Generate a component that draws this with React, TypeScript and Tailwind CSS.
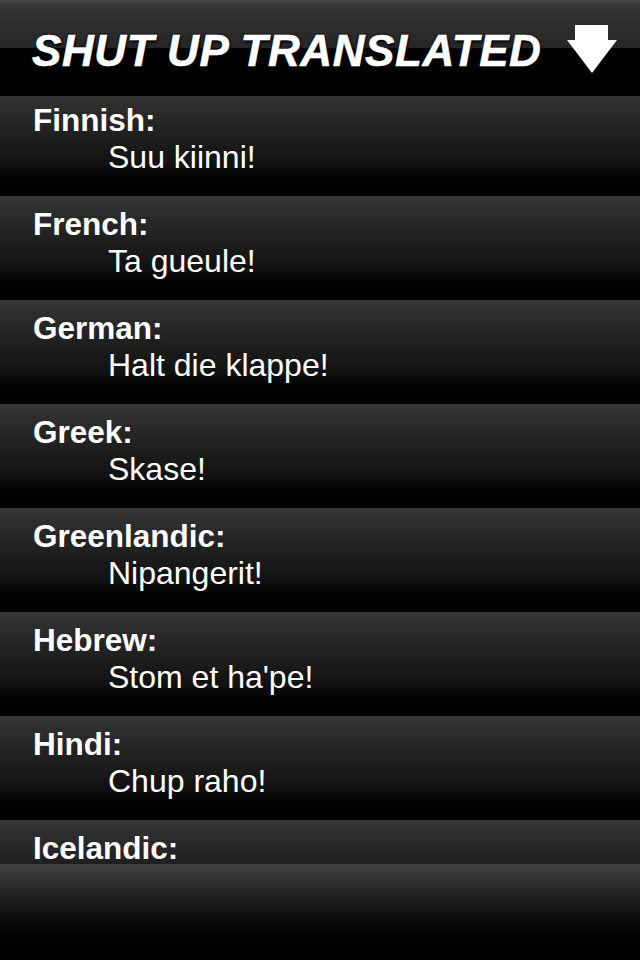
import React from "react";

const items: [string, string | null][] = [
  ["Finnish:", "Suu kiinni!"],
  ["French:", "Ta gueule!"],
  ["German:", "Halt die klappe!"],
  ["Greek:", "Skase!"],
  ["Greenlandic:", "Nipangerit!"],
  ["Hebrew:", "Stom et ha'pe!"],
  ["Hindi:", "Chup raho!"],
  ["Icelandic:", null],
];

export default function App() {
  return (
    <div
      className="w-[640px] h-[960px] bg-black overflow-hidden flex flex-col text-white"
      style={{ fontFamily: '"Liberation Sans", Arial, sans-serif' }}
    >
      <header className="h-[96px] shrink-0 relative flex flex-col">
        <div className="h-[48px] bg-gradient-to-b from-[#4a4a4a] via-[#353535] via-10% to-[#262626]" />
        <div className="h-[48px] bg-black" />
        <div className="absolute inset-0 flex items-center justify-between pl-[32px] pr-[22px]">
          <span
            className="text-[44px] font-bold italic leading-none tracking-[0.6px] mt-[6px]"
            style={{ textShadow: "0 0 3px #000, 1px 2px 3px #000", WebkitTextStroke: "0.6px #fff" }}
          >
            SHUT UP TRANSLATED
          </span>
          <svg width="52" height="50" viewBox="0 0 52 50" className="mt-[4px]">
            <path d="M9 0 H42 V15 H51 L26 48 L1 15 H9 Z" fill="#fff" />
          </svg>
        </div>
      </header>
      <div className="flex-1 overflow-hidden flex flex-col -mt-[4px]">
        {items.map(([label, value], i) => (
          <div
            key={i}
            className="h-[104px] shrink-0 bg-gradient-to-b from-[#353535] via-[#111111] via-70% to-[#000000] pt-[10px] pl-[33px] leading-[37px] text-[32px]"
          >
            <div className="font-bold text-[31.5px]">{label}</div>
            {value && <div className="pl-[75px]">{value}</div>}
          </div>
        ))}
      </div>
      <div className="h-[96px] shrink-0 bg-gradient-to-b from-[#444444] via-[#111111] via-50% to-black" />
    </div>
  );
}
